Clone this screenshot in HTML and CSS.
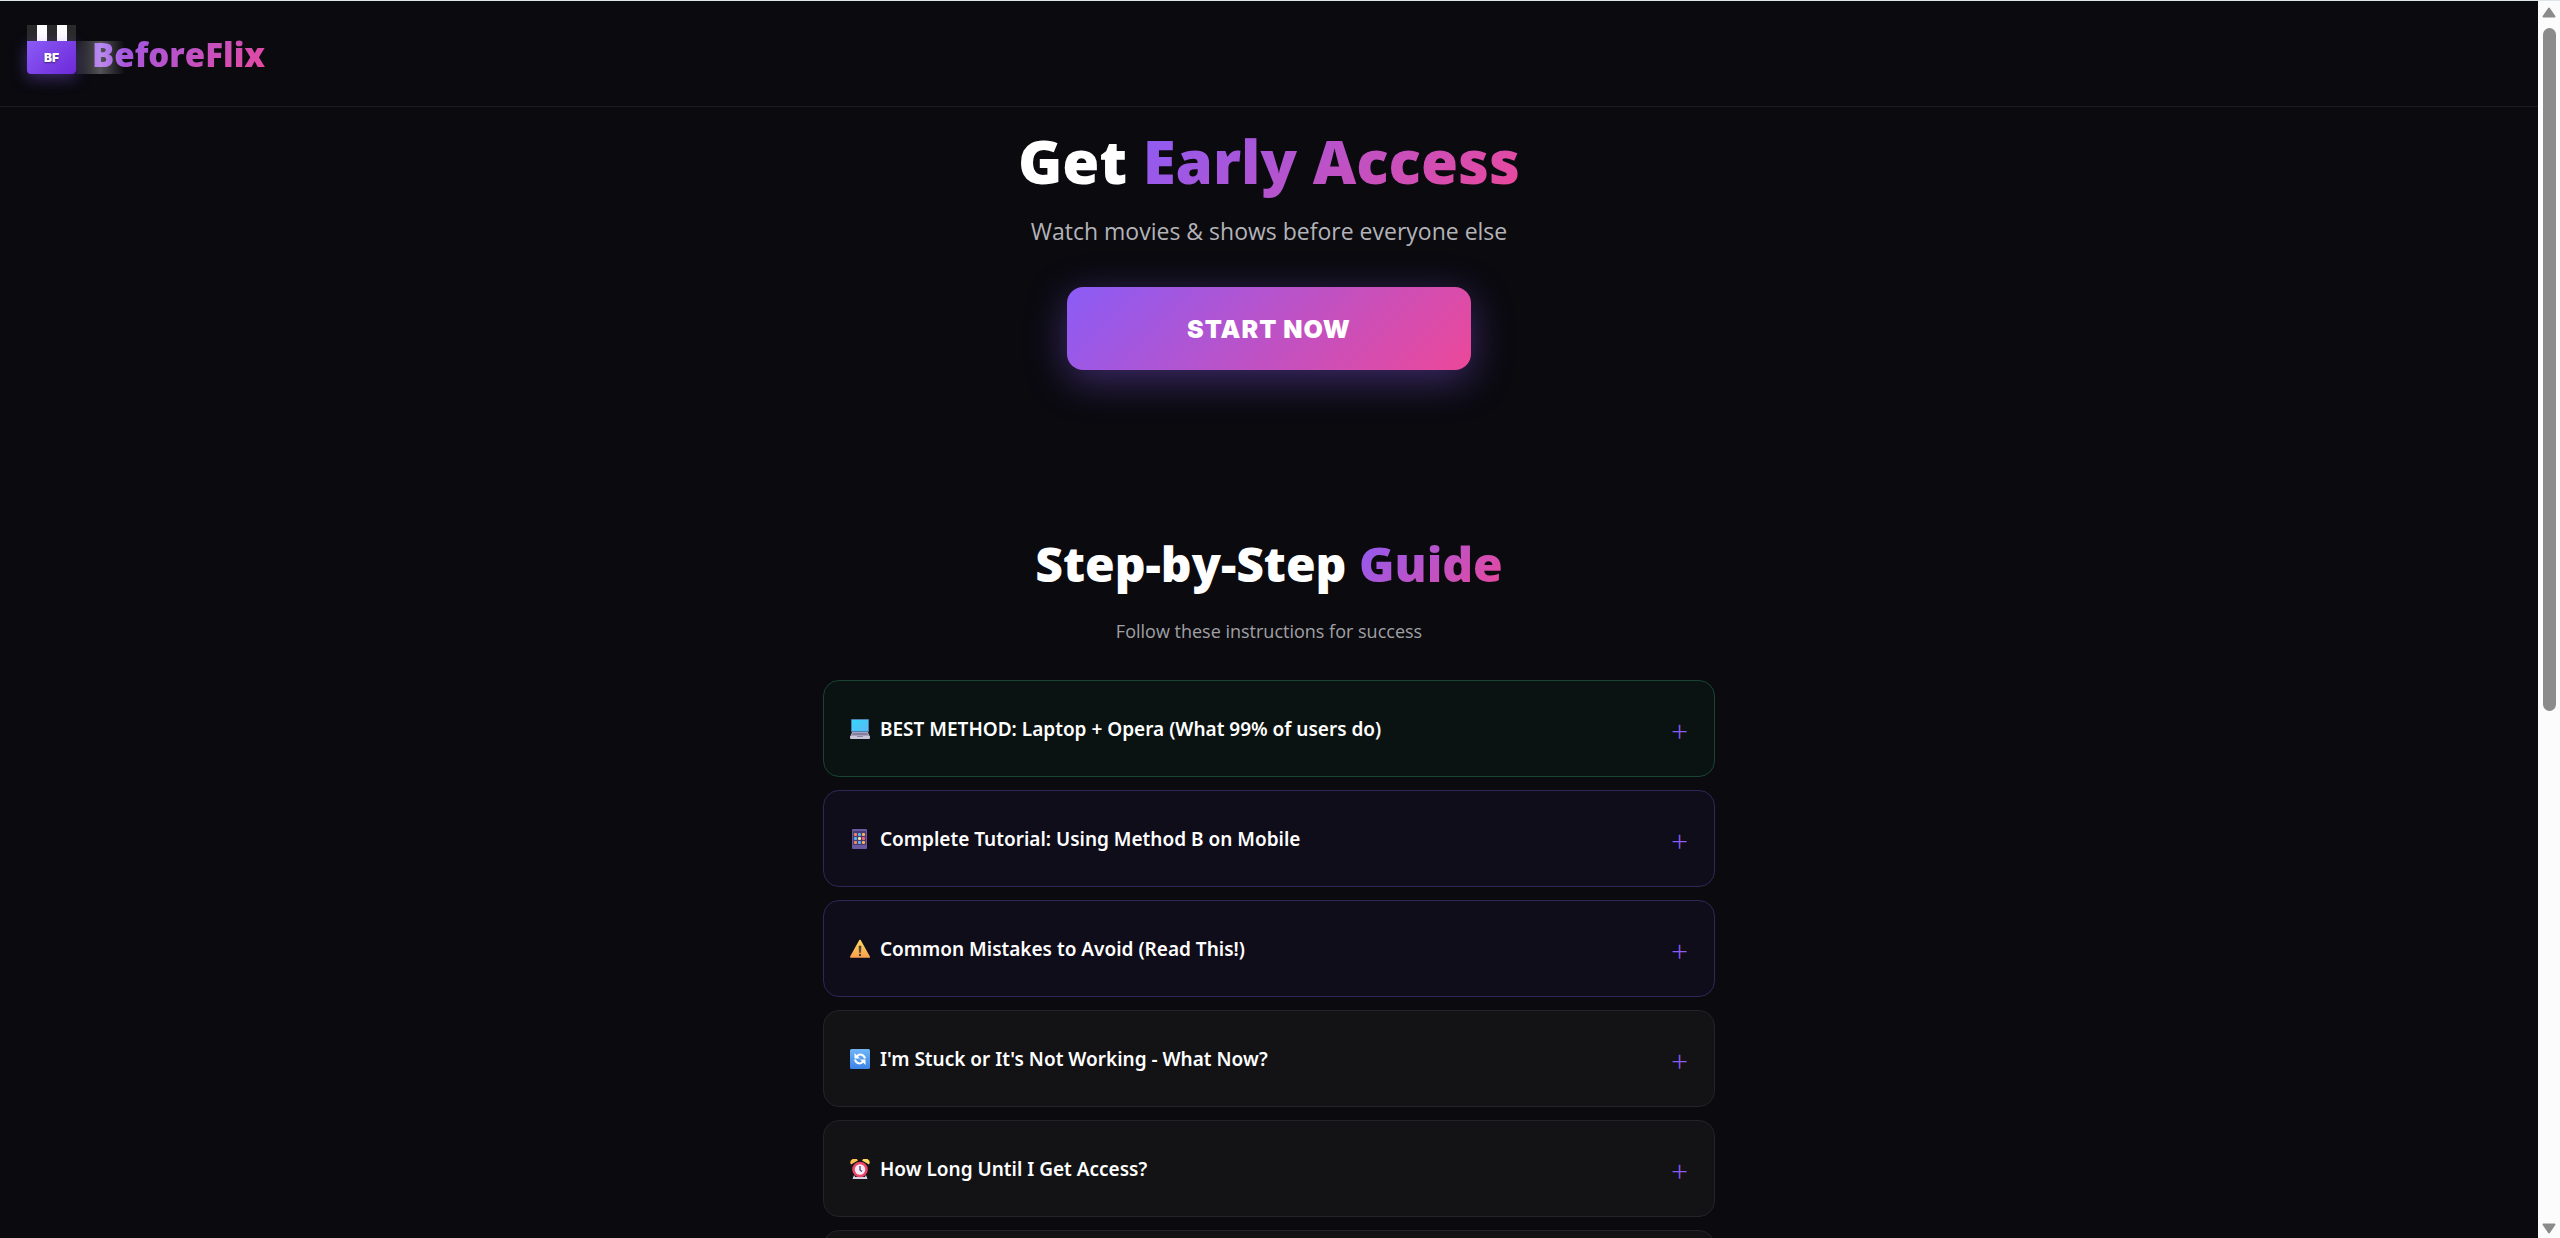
FILE: index.html
```html
<!DOCTYPE html>
<html lang="en">
<head>
    <meta charset="UTF-8">
    <meta name="viewport" content="width=device-width, initial-scale=1.0">
    <title>BeforeFlix</title>
    <link rel="stylesheet" href="styles.css">
</head>
<body>

    <div class="page">
        <header class="header">
            <a href="#" class="logo">
                <span class="clapper">
                    <span class="clapper-top"></span>
                    <span class="clapper-body">BF</span>
                    <span class="shine"></span>
                </span>
                <span class="logo-text gradient-text">BeforeFlix</span>
            </a>
        </header>

        <main>
            <section class="hero">
                <h1>Get <span class="gradient-text">Early Access</span></h1>
                <p class="subtitle">Watch movies &amp; shows before everyone else</p>
                <button class="start-button">START NOW</button>
            </section>

            <section class="guide">
                <h2>Step-by-Step <span class="gradient-text">Guide</span></h2>
                <p class="guide-subtitle">Follow these instructions for success</p>

                <div class="faq">
                    <details class="faq-item best">
                        <summary>
                            <svg class="icon" viewBox="0 0 20 20">
                                <defs>
                                    <linearGradient id="screen" x1="0" y1="0" x2="1" y2="1">
                                        <stop offset="0" stop-color="#35d5fb"/>
                                        <stop offset="1" stop-color="#5bb9f5"/>
                                    </linearGradient>
                                </defs>
                                <rect x="1" y="0" width="18" height="13" rx="1" fill="#4a7fae"/>
                                <rect x="2" y="1" width="16" height="11" fill="url(#screen)"/>
                                <path d="M2 13h16l2 5H0z" fill="#a7a3bd"/>
                                <path d="M3 14h14l1 2H2z" fill="#82809c"/>
                                <rect x="0" y="17" width="20" height="3" rx="1" fill="#c9c5d8"/>
                                <rect x="7" y="17" width="6" height="1" fill="#8b87a3"/>
                            </svg>
                            <span class="question">BEST METHOD: Laptop + Opera (What 99% of users do)</span>
                            <span class="plus">+</span>
                        </summary>
                    </details>

                    <details class="faq-item method">
                        <summary>
                            <svg class="icon" viewBox="0 0 20 20">
                                <rect x="2" y="0" width="15" height="20" rx="1" fill="#6a58a0"/>
                                <rect x="3" y="2" width="13" height="14" fill="#493b74"/>
                                <g fill="#f08a5d">
                                    <rect x="4" y="4" width="3" height="3" rx="1"/>
                                    <rect x="8" y="8" width="3" height="3" rx="1" fill="#ffe29a"/>
                                    <rect x="12" y="12" width="3" height="3" rx="1" fill="#ffb057"/>
                                    <rect x="12" y="4" width="3" height="3" rx="1" fill="#ffb057"/>
                                    <rect x="4" y="12" width="3" height="3" rx="1"/>
                                </g>
                                <g fill="#58b6f0">
                                    <rect x="8" y="4" width="3" height="3" rx="1"/>
                                    <rect x="4" y="8" width="3" height="3" rx="1"/>
                                    <rect x="12" y="8" width="3" height="3" rx="1" fill="#f0647a"/>
                                    <rect x="8" y="12" width="3" height="3" rx="1"/>
                                </g>
                            </svg>
                            <span class="question">Complete Tutorial: Using Method B on Mobile</span>
                            <span class="plus">+</span>
                        </summary>
                    </details>

                    <details class="faq-item method">
                        <summary>
                            <svg class="icon" viewBox="0 0 20 20">
                                <defs>
                                    <linearGradient id="warn" x1="0" y1="0" x2="0" y2="1">
                                        <stop offset="0" stop-color="#fcd75c"/>
                                        <stop offset="1" stop-color="#f9a14e"/>
                                    </linearGradient>
                                </defs>
                                <path d="M10 1.5 19.2 18H.8z" fill="url(#warn)" stroke="url(#warn)" stroke-width="1.6" stroke-linejoin="round"/>
                                <path d="M9 7h2l-.4 6.500h-1.200z" fill="#4b3a3a" stroke="#4b3a3a" stroke-width=".6"/>
                                <circle cx="10" cy="16" r="1.200" fill="#4b3a3a"/>
                            </svg>
                            <span class="question">Common Mistakes to Avoid (Read This!)</span>
                            <span class="plus">+</span>
                        </summary>
                    </details>

                    <details class="faq-item">
                        <summary>
                            <svg class="icon" viewBox="0 0 20 20">
                                <defs>
                                    <linearGradient id="sync" x1="0" y1="0" x2="0" y2="1">
                                        <stop offset="0" stop-color="#6fb6f8"/>
                                        <stop offset="1" stop-color="#3c83e8"/>
                                    </linearGradient>
                                </defs>
                                <rect width="20" height="20" rx="1.500" fill="url(#sync)"/>
                                <path d="M7 7.500C9 4.500 14 5 15 9.500M13 12.500C11 15.500 6 15 5 10.500" fill="none" stroke="#fff" stroke-width="2"/>
                                <path d="M4.500 4v5.500H10zM15.500 16v-5.500H10z" fill="#fff"/>
                            </svg>
                            <span class="question">I'm Stuck or It's Not Working - What Now?</span>
                            <span class="plus">+</span>
                        </summary>
                    </details>

                    <details class="faq-item">
                        <summary>
                            <svg class="icon" viewBox="0 0 20 20">
                                <path d="M4 16 2.500 20h4zM16 16l1.500 4h-4z" fill="#c9c5d8"/>
                                <rect x="3" y="18" width="14" height="2" fill="#d9d3e6"/>
                                <path d="M1 5.500A4 4 0 0 1 8 1.500z" fill="#fcc24b"/>
                                <path d="M19 5.500A4 4 0 0 0 12 1.500z" fill="#fcd75c"/>
                                <circle cx="10" cy="10.500" r="7.800" fill="#ec4667"/>
                                <circle cx="10" cy="10.500" r="5.200" fill="#f8e9f6"/>
                                <path d="M10 7v4l2 1.500" fill="none" stroke="#55406f" stroke-width="1.300"/>
                            </svg>
                            <span class="question">How Long Until I Get Access?</span>
                            <span class="plus">+</span>
                        </summary>
                    </details>

                    <details class="faq-item">
                        <summary></summary>
                    </details>
                </div>
            </section>
        </main>
    </div>

    <div class="scrollbar">
        <svg class="arrow" viewBox="0 0 14 11"><path d="M7 1.500 12.500 9.500H1.500z"/></svg>
        <div class="track">
            <div class="thumb"></div>
        </div>
        <svg class="arrow" viewBox="0 0 14 11"><path d="M7 9.500 12.500 1.500H1.500z"/></svg>
    </div>

</body>
</html>
```
FILE: styles.css
```css
* {
    margin: 0;
    padding: 0;
    box-sizing: border-box;
}

body {
    font-family: 'Open Sans', 'Noto Sans', sans-serif;
    background: #0a0a0f;
    color: #fff;
    display: flex;
    height: 100vh;
    overflow: hidden;
    border-top: 1px solid #dfe5e8;
}

.page {
    flex: 1;
    overflow: hidden;
}

.gradient-text {
    background: linear-gradient(135deg, #8b5cf6, #ec4899);
    -webkit-background-clip: text;
    background-clip: text;
    color: transparent;
}

/* Header */
.header {
    height: 106px;
    padding: 24px 27px;
    border-bottom: 1px solid #1b1b20;
}

.logo {
    display: inline-flex;
    gap: 16px;
    text-decoration: none;
}

.clapper {
    position: relative;
    width: 49px;
    height: 49px;
}

.clapper-top {
    display: block;
    height: 16px;
    background: repeating-linear-gradient(90deg, #2a2a2a 0 10px, #fff 10px 20px);
}

.clapper-body {
    display: flex;
    align-items: center;
    justify-content: center;
    height: 33px;
    border-radius: 0 0 4px 4px;
    background: linear-gradient(135deg, #8b5cf6, #6d28d9);
    box-shadow: 0 4px 16px rgba(139, 92, 246, 0.4);
    color: #fff;
    font-family: Inter, sans-serif;
    font-size: 12px;
    font-weight: 900;
    text-shadow: 0 1px 2px rgba(0, 0, 0, 0.5);
}

/* Light sweep next to the clapper */
.shine {
    position: absolute;
    left: 100%;
    bottom: 0;
    width: 100%;
    height: 33px;
    background: linear-gradient(90deg, rgba(255, 255, 255, 0.05), rgba(255, 255, 255, 0.3) 50%, transparent);
}

.logo-text {
    font-size: 33px;
    font-weight: 800;
    line-height: 60px;
}

/* Hero */
.hero {
    padding-top: 16px;
    text-align: center;
}

h1 {
    font-size: 60px;
    font-weight: 800;
    line-height: 76px;
}

.subtitle {
    margin-top: 12px;
    color: #b3b3b8;
    font-size: 23px;
    line-height: 40px;
}

.start-button {
    width: 404px;
    height: 83px;
    margin-top: 36px;
    border: none;
    border-radius: 16px;
    background: linear-gradient(135deg, #8b5cf6, #ec4899);
    box-shadow: 0 10px 40px rgba(139, 92, 246, 0.4);
    color: #fff;
    font-family: Inter, sans-serif;
    font-size: 25px;
    font-weight: 900;
    letter-spacing: 1px;
    cursor: pointer;
}

/* Guide */
.guide {
    max-width: 892px;
    margin: 0 auto;
    padding-top: 164px;
    text-align: center;
}

h2 {
    font-size: 48px;
    font-weight: 800;
    line-height: 60px;
}

.guide-subtitle {
    margin-top: 22px;
    color: #a0a0a5;
    font-size: 18px;
    line-height: 30px;
}

.faq {
    display: flex;
    flex-direction: column;
    gap: 13px;
    margin-top: 34px;
}

.faq-item {
    background: #131316;
    border: 1px solid #242428;
    border-radius: 16px;
}

.faq-item.best {
    background: #0b1312;
    border-color: #184432;
}

.faq-item.method {
    background: #100d1a;
    border-color: #302657;
}

.faq-item summary {
    display: flex;
    align-items: center;
    height: 95px;
    padding: 0 26px;
    cursor: pointer;
    list-style: none;
}

.icon {
    width: 20px;
    height: 20px;
    margin-right: 10px;
}

.question {
    flex: 1;
    font-family: 'Noto Sans', sans-serif;
    font-size: 19px;
    font-weight: 600;
    text-align: left;
}

.plus {
    padding-top: 4px;
    color: #8b5cf6;
    font-size: 30px;
    font-weight: 300;
    line-height: 32px;
}

/* Scrollbar */
.scrollbar {
    display: flex;
    flex-direction: column;
    align-items: center;
    width: 22px;
    padding: 6px 0 4px;
    background: #fcfcfc;
}

.arrow {
    width: 14px;
    height: 11px;
    fill: #8b8b8b;
    stroke: #8b8b8b;
    stroke-width: 2;
    stroke-linejoin: round;
}

.track {
    flex: 1;
    padding: 10px 0;
}

.thumb {
    width: 13px;
    height: 57.6%;
    border-radius: 7px;
    background: #8b8b8b;
}
```
